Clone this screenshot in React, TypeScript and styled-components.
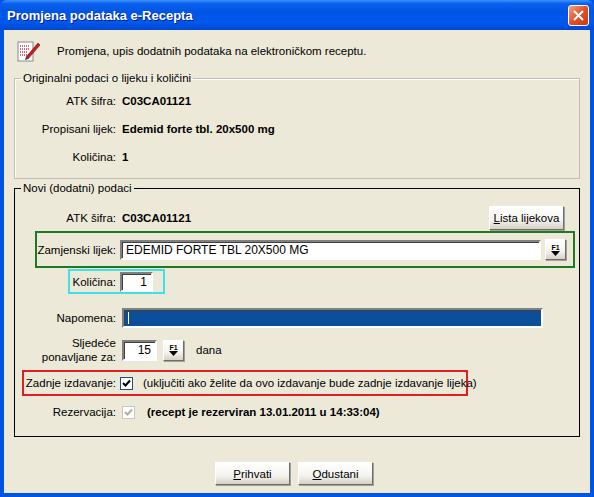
import React from "react";
import styled, { createGlobalStyle } from "styled-components";

const G = createGlobalStyle`
  html,body{margin:0;padding:0;background:#ECE9D8;}
  body{font-family:"Liberation Sans",Arial,sans-serif;font-size:11.5px;color:#000;}
  *{box-sizing:border-box;}
`;

const Win = styled.div`
  width:594px;height:497px;display:flex;flex-direction:column;
  background:#0054E3;
`;
const TitleBar = styled.div`
  height:30px;flex:none;display:flex;align-items:center;justify-content:space-between;
  padding:0 5px 0 7px;
  background:linear-gradient(#3D95FF 0%,#0A5FEC 12%,#0055E5 40%,#0058EE 75%,#0047D0 100%);
  border-radius:7px 7px 0 0;
  color:#fff;font-family:"Liberation Sans",Arial,sans-serif;font-weight:bold;font-size:13px;
  text-shadow:1px 1px #0A1E80;
`;
const CloseBtn = styled.div`
  width:21px;height:21px;border:1px solid #fff;border-radius:3px;
  background:linear-gradient(135deg,#F2A38A,#E0512A 50%,#C93A13);
  display:flex;align-items:center;justify-content:center;
`;
const Body = styled.div`
  flex:1;margin:0 4px 4px;background:#ECE9D8;padding:0 10px;
  display:flex;flex-direction:column;
`;
const Header = styled.div`
  height:40px;display:flex;align-items:center;gap:16px;padding-left:3px;margin-top:1px;
`;
const Set = styled.fieldset<{ $dark?: boolean }>`
  margin:${(p) => (p.$dark ? "2px" : "0")} 0 0;padding:0 15px ${(p) => (p.$dark ? "15px" : "7px")} 0;
  border:1px solid ${(p) => (p.$dark ? "#000" : "#C0BFB4")};
  ${(p) => (p.$dark ? "" : "box-shadow:inset 1px 1px #fff;")}
  display:flex;flex-direction:column;min-width:0;
`;
const Legend = styled.legend`
  margin-left:6px;padding:0 2px;line-height:14px;
`;
const Row = styled.div<{ $h: number; $mt?: number }>`
  height:${(p) => p.$h}px;margin-top:${(p) => p.$mt ?? 0}px;
  display:flex;align-items:center;gap:6px;white-space:nowrap;
`;
const Label = styled.div<{ $w?: number }>`
  width:${(p) => p.$w ?? 101}px;flex:none;text-align:right;white-space:nowrap;line-height:14px;
`;
const Value = styled.div`font-weight:bold;`;
const Box = styled.div<{ $c: string; $ml: number; $w: number; $h: number; $mt: number }>`
  margin-left:${(p) => p.$ml}px;width:${(p) => p.$w}px;height:${(p) => p.$h}px;margin-top:${(p) => p.$mt}px;
  border:2px solid ${(p) => p.$c};display:flex;align-items:center;gap:4px;white-space:nowrap;
`;
const Input = styled.div<{ $w: number; $h?: number; $right?: boolean; $bg?: string }>`
  width:${(p) => p.$w}px;height:${(p) => p.$h ?? 20}px;flex:none;
  background:${(p) => p.$bg ?? "#fff"};
  border:2px solid;border-color:#808080 #fff #fff #808080;
  box-shadow:inset 1px 1px #404040;
  display:flex;align-items:center;padding:0 4px;
  justify-content:${(p) => (p.$right ? "flex-end" : "flex-start")};
  font-size:12px;
`;
const Btn = styled.div<{ $w: number; $h?: number }>`
  width:${(p) => p.$w}px;height:${(p) => p.$h ?? 23}px;flex:none;
  background:linear-gradient(#FFFFFF,#F4F3EE 60%,#D6D0C5);
  border:1px solid;border-color:#fff #716F64 #716F64 #fff;
  box-shadow:1px 1px #A0A0A0;
  display:flex;align-items:center;justify-content:center;white-space:nowrap;
`;
const U = styled.span`text-decoration:underline;`;
const Spacer = styled.div`flex:1;`;
const Check = styled.div<{ $dis?: boolean }>`
  width:13px;height:13px;flex:none;background:#fff;
  border:1px solid ${(p) => (p.$dis ? "#CAC8BB" : "#1C5180")};
  display:flex;align-items:center;justify-content:center;
`;
const Buttons = styled.div`
  margin-top:25px;display:flex;justify-content:center;gap:8px;padding-right:6px;
`;
const F1Text = styled.div`font-size:7px;font-weight:bold;line-height:7px;`;
const F1Col = styled.div`display:flex;flex-direction:column;align-items:center;`;
const Note = styled.span`margin-left:6px;`;

const F1 = () => (
  <Btn $w={21} $h={21}>
    <F1Col>
      <F1Text>F1</F1Text>
      <svg width="9" height="5"><polygon points="0,0 9,0 4.5,5" fill="#000" /></svg>
    </F1Col>
  </Btn>
);
const Tick = ({ c }: { c: string }) => (
  <svg width="9" height="9" viewBox="0 0 9 9"><path d="M1 4 L3.5 6.5 L8 1.5" stroke={c} strokeWidth="2" fill="none" /></svg>
);

export default function App() {
  return (
    <Win>
      <G />
      <TitleBar>
        <span>Promjena podataka e-Recepta</span>
        <CloseBtn>
          <svg width="11" height="11"><path d="M1 1 L10 10 M10 1 L1 10" stroke="#fff" strokeWidth="2" /></svg>
        </CloseBtn>
      </TitleBar>
      <Body>
        <Header>
          <svg width="24" height="24" viewBox="0 0 24 24">
            <rect x="1" y="3" width="15" height="19" fill="#fff" stroke="#888" />
            <path d="M3 7h10M3 10h10M3 13h8M3 16h9" stroke="#D03050" strokeWidth="1.5" strokeDasharray="1 1" />
            <path d="M9 18 L21 4 L23 6 L11 20 Z" fill="#C02020" stroke="#600" strokeWidth="0.5" />
            <path d="M9 18 L8 21 L11 20Z" fill="#333" />
          </svg>
          <span>Promjena, upis dodatnih podataka na elektroničkom receptu.</span>
        </Header>
        <Set>
          <Legend>Originalni podaci o lijeku i količini</Legend>
          <Row $h={28} $mt={2}><Label>ATK šifra:</Label><Value>C03CA01121</Value></Row>
          <Row $h={28}><Label>Propisani lijek:</Label><Value>Edemid forte tbl. 20x500 mg</Value></Row>
          <Row $h={28}><Label>Količina:</Label><Value>1</Value></Row>
        </Set>
        <Set $dark>
          <Legend>Novi (dodatni) podaci</Legend>
          <Row $h={24} $mt={11}>
            <Label>ATK šifra:</Label><Value>C03CA01121</Value><Spacer />
            <Btn $w={75} $h={24}><span><U>L</U>ista lijekova</span></Btn>
          </Row>
          <Box $c="#1E7A1E" $ml={20} $w={540} $h={37} $mt={1}>
            <Label $w={79}>Zamjenski lijek:</Label>
            <Input $w={421}>EDEMID FORTE TBL 20X500 MG</Input>
            <F1 />
          </Box>
          <Box $c="#40E0E8" $ml={53} $w={97} $h={25} $mt={1}>
            <Label $w={46}>Količina:</Label>
            <Input $w={33} $right>1</Input>
          </Box>
          <Row $h={20} $mt={14}>
            <Label>Napomena:</Label>
            <Input $w={421} $bg="#0B4F9C"><svg width="2" height="12"><rect width="1" height="12" fill="#fff" /></svg></Input>
          </Row>
          <Row $h={26} $mt={9}>
            <Label>Sljedeće<br />ponavljane za:</Label>
            <Input $w={35} $h={21} $right>15</Input>
            <F1 />
            <Note>dana</Note>
          </Row>
          <Box $c="#E02020" $ml={7} $w={446} $h={26} $mt={7}>
            <Label $w={92}>Zadnje izdavanje:</Label>
            <Check><Tick c="#000" /></Check>
            <Note>(uključiti ako želite da ovo izdavanje bude zadnje izdavanje lijeka)</Note>
          </Box>
          <Row $h={18} $mt={7}>
            <Label>Rezervacija:</Label>
            <Check $dis><Tick c="#B0AFA0" /></Check>
            <Value style={{ marginLeft: 6 }}>(recept je rezerviran 13.01.2011 u 14:33:04)</Value>
          </Row>
        </Set>
        <Buttons>
          <Btn $w={75}><span><U>P</U>rihvati</span></Btn>
          <Btn $w={75}><span><U>O</U>dustani</span></Btn>
        </Buttons>
      </Body>
    </Win>
  );
}
